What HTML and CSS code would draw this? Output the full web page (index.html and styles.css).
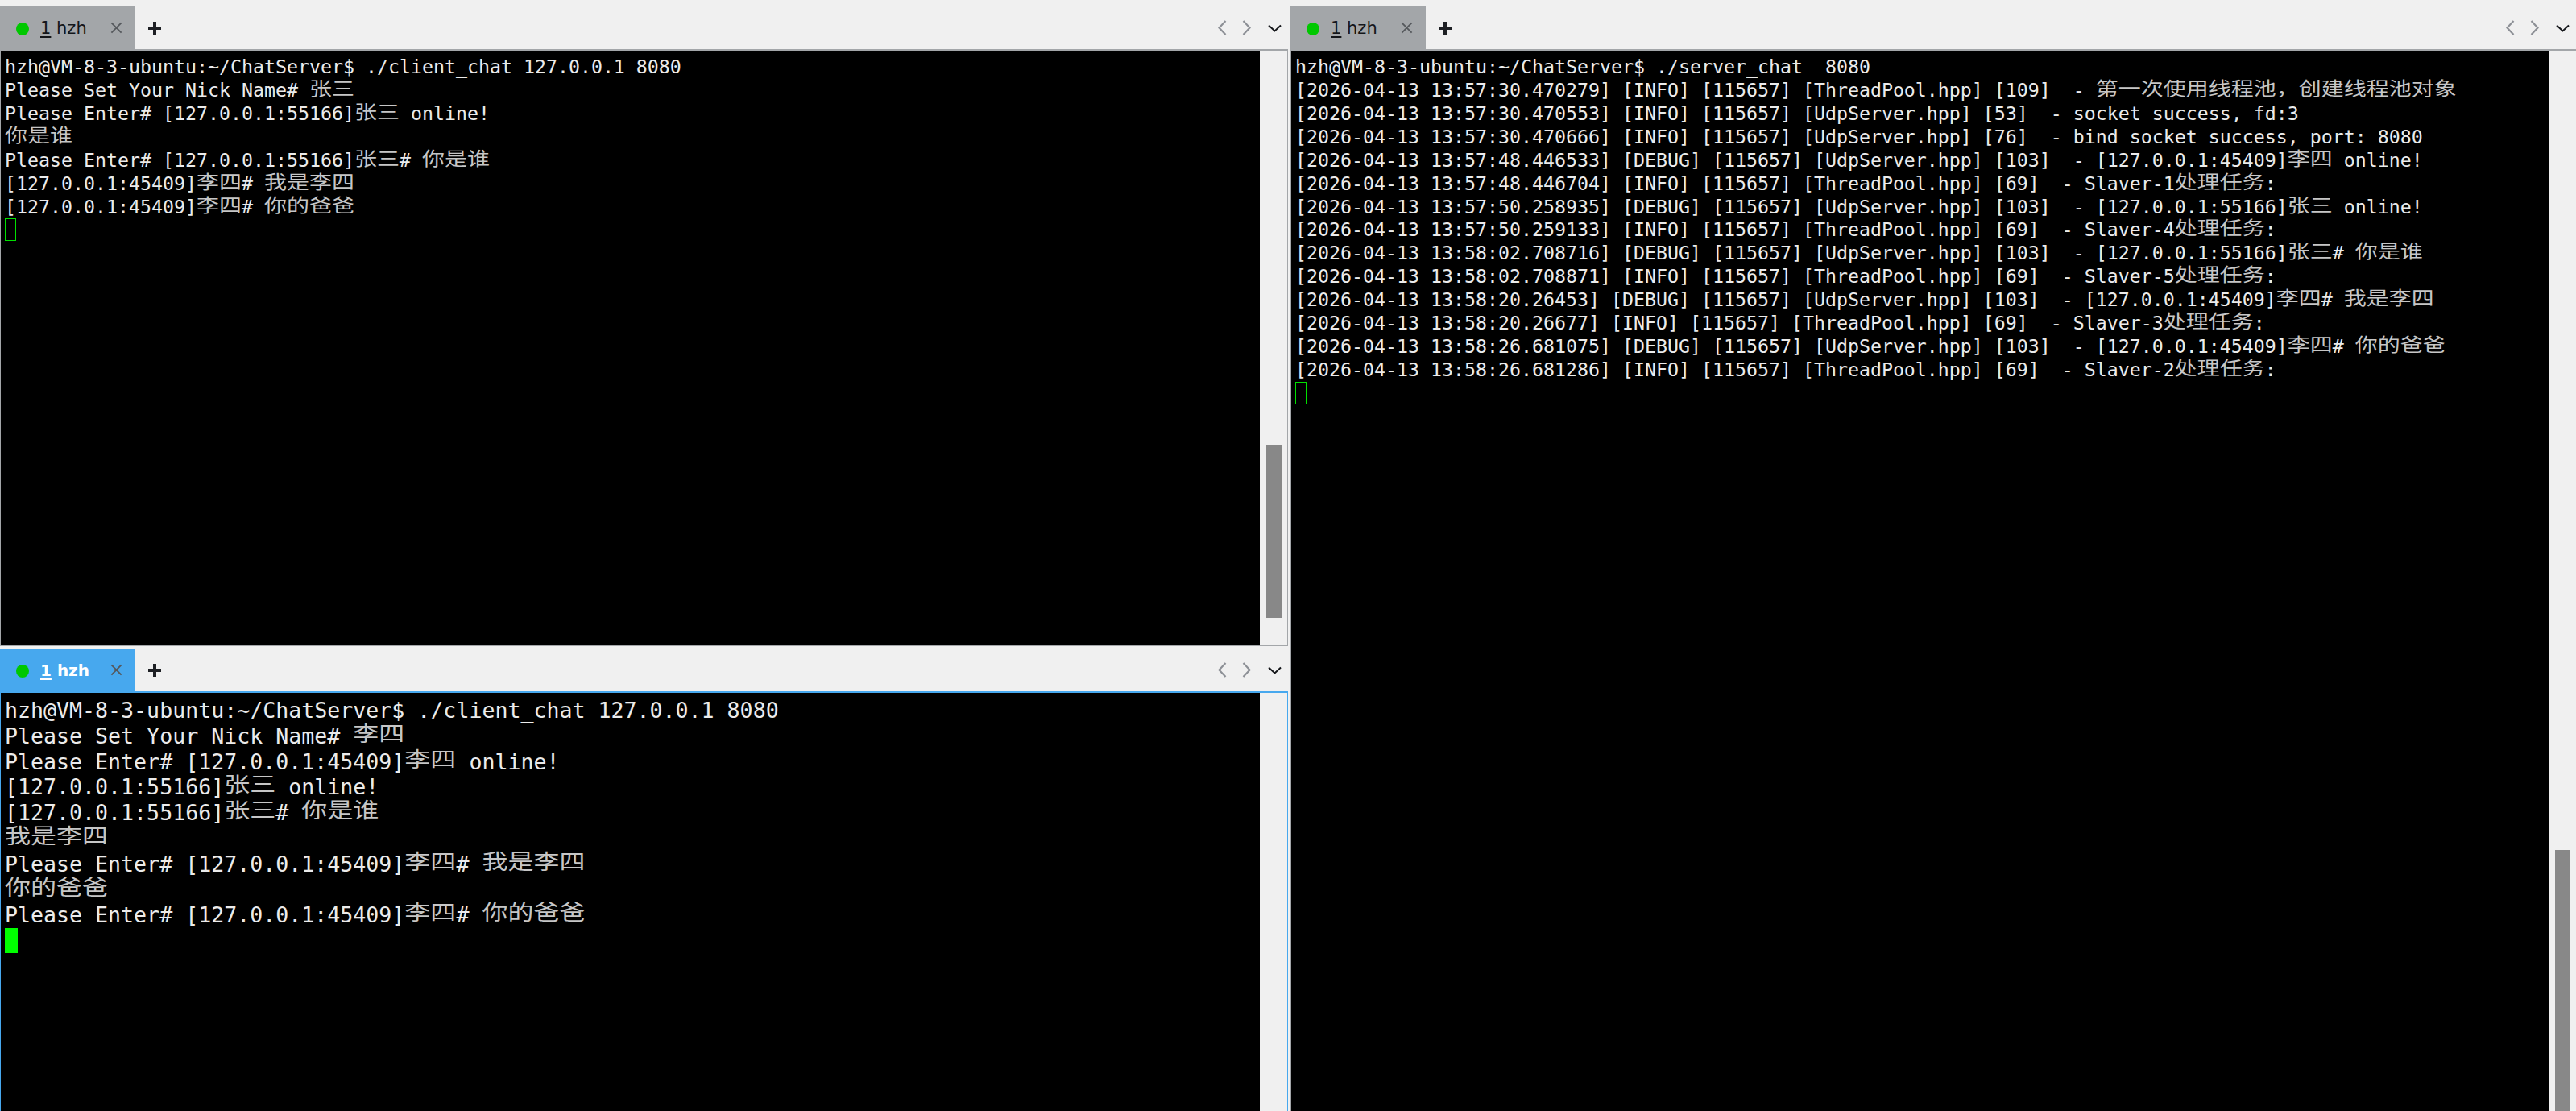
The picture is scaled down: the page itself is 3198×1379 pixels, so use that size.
FILE: index.html
```html
<!DOCTYPE html>
<html lang="zh">
<head>
<meta charset="utf-8">
<title>hzh</title>
<link rel="stylesheet" href="styles.css">
</head>
<body>
<div class="app">
  <div class="col-left">
    <section class="pane pane-top">
      <div class="tabbar">
        <div class="tab"><i class="dot"></i><span class="tab-label"><u>1</u> hzh</span>
          <svg class="close" viewBox="0 0 16 16"><path d="M1.5 1.5 14.5 14.5M14.5 1.5 1.5 14.5"/></svg></div>
        <svg class="plus" viewBox="0 0 16 16"><path d="M8 0V16M0 8H16"/></svg>
        <div class="controls">
          <svg class="chev" viewBox="0 0 11 19"><path d="M9.5 1 1.5 9.5 9.5 18"/></svg>
          <svg class="chev" viewBox="0 0 11 19"><path d="M1.5 1 9.5 9.5 1.5 18"/></svg>
          <svg class="down" viewBox="0 0 17 10"><path d="M1 1.5 8.5 8.5 16 1.5"/></svg>
        </div>
      </div>
      <div class="view view-closed">
        <div class="term term-small">
          <div class="line">hzh@VM-8-3-ubuntu:~/ChatServer$ ./client_chat 127.0.0.1 8080</div>
          <div class="line">Please Set Your Nick Name# <span class="c">张三</span></div>
          <div class="line">Please Enter# [127.0.0.1:55166]<span class="c">张三</span> online!</div>
          <div class="line"><span class="c">你是谁</span></div>
          <div class="line">Please Enter# [127.0.0.1:55166]<span class="c">张三</span># <span class="c">你是谁</span></div>
          <div class="line">[127.0.0.1:45409]<span class="c">李四</span># <span class="c">我是李四</span></div>
          <div class="line">[127.0.0.1:45409]<span class="c">李四</span># <span class="c">你的爸爸</span></div>
          <div class="cursor cursor-idle"></div>
        </div>
        <div class="scroll"><div class="thumb thumb-left"></div></div>
      </div>
    </section>
    <section class="pane pane-bottom">
      <div class="tabbar">
        <div class="tab tab-active"><i class="dot"></i><span class="tab-label"><u>1</u> hzh</span>
          <svg class="close" viewBox="0 0 16 16"><path d="M1.5 1.5 14.5 14.5M14.5 1.5 1.5 14.5"/></svg></div>
        <svg class="plus" viewBox="0 0 16 16"><path d="M8 0V16M0 8H16"/></svg>
        <div class="controls">
          <svg class="chev" viewBox="0 0 11 19"><path d="M9.5 1 1.5 9.5 9.5 18"/></svg>
          <svg class="chev" viewBox="0 0 11 19"><path d="M1.5 1 9.5 9.5 1.5 18"/></svg>
          <svg class="down" viewBox="0 0 17 10"><path d="M1 1.5 8.5 8.5 16 1.5"/></svg>
        </div>
      </div>
      <div class="view view-active">
        <div class="term term-large">
          <div class="line">hzh@VM-8-3-ubuntu:~/ChatServer$ ./client_chat 127.0.0.1 8080</div>
          <div class="line">Please Set Your Nick Name# <span class="c">李四</span></div>
          <div class="line">Please Enter# [127.0.0.1:45409]<span class="c">李四</span> online!</div>
          <div class="line">[127.0.0.1:55166]<span class="c">张三</span> online!</div>
          <div class="line">[127.0.0.1:55166]<span class="c">张三</span># <span class="c">你是谁</span></div>
          <div class="line"><span class="c">我是李四</span></div>
          <div class="line">Please Enter# [127.0.0.1:45409]<span class="c">李四</span># <span class="c">我是李四</span></div>
          <div class="line"><span class="c">你的爸爸</span></div>
          <div class="line">Please Enter# [127.0.0.1:45409]<span class="c">李四</span># <span class="c">你的爸爸</span></div>
          <div class="cursor cursor-focus"></div>
        </div>
        <div class="scroll"></div>
      </div>
    </section>
  </div>
  <section class="pane col-right">
    <div class="tabbar">
      <div class="tab"><i class="dot"></i><span class="tab-label"><u>1</u> hzh</span>
        <svg class="close" viewBox="0 0 16 16"><path d="M1.5 1.5 14.5 14.5M14.5 1.5 1.5 14.5"/></svg></div>
      <svg class="plus" viewBox="0 0 16 16"><path d="M8 0V16M0 8H16"/></svg>
      <div class="controls">
        <svg class="chev" viewBox="0 0 11 19"><path d="M9.5 1 1.5 9.5 9.5 18"/></svg>
        <svg class="chev" viewBox="0 0 11 19"><path d="M1.5 1 9.5 9.5 1.5 18"/></svg>
        <svg class="down" viewBox="0 0 17 10"><path d="M1 1.5 8.5 8.5 16 1.5"/></svg>
      </div>
    </div>
    <div class="view view-right">
      <div class="term term-small">
        <div class="line">hzh@VM-8-3-ubuntu:~/ChatServer$ ./server_chat  8080</div>
        <div class="line">[2026-04-13 13:57:30.470279] [INFO] [115657] [ThreadPool.hpp] [109]  - <span class="c">第一次使用线程池，创建线程池对象</span></div>
        <div class="line">[2026-04-13 13:57:30.470553] [INFO] [115657] [UdpServer.hpp] [53]  - socket success, fd:3</div>
        <div class="line">[2026-04-13 13:57:30.470666] [INFO] [115657] [UdpServer.hpp] [76]  - bind socket success, port: 8080</div>
        <div class="line">[2026-04-13 13:57:48.446533] [DEBUG] [115657] [UdpServer.hpp] [103]  - [127.0.0.1:45409]<span class="c">李四</span> online!</div>
        <div class="line">[2026-04-13 13:57:48.446704] [INFO] [115657] [ThreadPool.hpp] [69]  - Slaver-1<span class="c">处理任务</span>:</div>
        <div class="line">[2026-04-13 13:57:50.258935] [DEBUG] [115657] [UdpServer.hpp] [103]  - [127.0.0.1:55166]<span class="c">张三</span> online!</div>
        <div class="line">[2026-04-13 13:57:50.259133] [INFO] [115657] [ThreadPool.hpp] [69]  - Slaver-4<span class="c">处理任务</span>:</div>
        <div class="line">[2026-04-13 13:58:02.708716] [DEBUG] [115657] [UdpServer.hpp] [103]  - [127.0.0.1:55166]<span class="c">张三</span># <span class="c">你是谁</span></div>
        <div class="line">[2026-04-13 13:58:02.708871] [INFO] [115657] [ThreadPool.hpp] [69]  - Slaver-5<span class="c">处理任务</span>:</div>
        <div class="line">[2026-04-13 13:58:20.26453] [DEBUG] [115657] [UdpServer.hpp] [103]  - [127.0.0.1:45409]<span class="c">李四</span># <span class="c">我是李四</span></div>
        <div class="line">[2026-04-13 13:58:20.26677] [INFO] [115657] [ThreadPool.hpp] [69]  - Slaver-3<span class="c">处理任务</span>:</div>
        <div class="line">[2026-04-13 13:58:26.681075] [DEBUG] [115657] [UdpServer.hpp] [103]  - [127.0.0.1:45409]<span class="c">李四</span># <span class="c">你的爸爸</span></div>
        <div class="line">[2026-04-13 13:58:26.681286] [INFO] [115657] [ThreadPool.hpp] [69]  - Slaver-2<span class="c">处理任务</span>:</div>
        <div class="cursor cursor-idle"></div>
      </div>
      <div class="scroll"><div class="thumb thumb-right"></div></div>
    </div>
  </section>
</div>
</body>
</html>
```
FILE: styles.css
```css
html, body {
  margin: 0;
  padding: 0;
  height: 100%;
  background: #f0f0f0;
  overflow: hidden;
}

.app {
  display: flex;
  height: 1379px;
  gap: 3px;
}

.col-left {
  width: 1599px;
  display: flex;
  flex-direction: column;
  flex: none;
}

.col-right {
  flex: 1;
  min-width: 0;
}

.pane {
  display: flex;
  flex-direction: column;
}

.pane-top {
  height: 802px;
  flex: none;
}

.pane-bottom {
  flex: 1;
  min-height: 0;
}

.tabbar {
  display: flex;
  align-items: center;
  height: 53px;
  flex: none;
  padding-right: 8px;
  background: #f0f0f0;
}

.pane-top .tabbar,
.col-right .tabbar {
  padding-top: 8px;
}

.pane-bottom .tabbar {
  padding-top: 3px;
}

.tab {
  width: 168px;
  height: 53px;
  display: flex;
  align-items: center;
  flex: none;
  background: #a3a6a9;
  color: #14161a;
  font-family: "DejaVu Sans", sans-serif;
  font-size: 21px;
}

.tab-active {
  background: #47a8ee;
  color: #fff;
  font-weight: 700;
  font-size: 20px;
}

.dot {
  width: 16px;
  height: 16px;
  border-radius: 50%;
  background: #00c800;
  margin: 3px 0 0 20px;
  flex: none;
}

.tab-label {
  margin-left: 14px;
  width: 87px;
  flex: none;
  white-space: pre;
  line-height: 28px;
}

.tab-label u {
  text-underline-offset: 3px;
}

.close {
  width: 15px;
  height: 15px;
  flex: none;
  fill: none;
  stroke: #55585c;
  stroke-width: 2;
}

.plus {
  width: 16px;
  height: 16px;
  margin-left: 16px;
  flex: none;
  fill: none;
  stroke: #1e2024;
  stroke-width: 4;
}

.controls {
  margin-left: auto;
  display: flex;
  align-items: center;
}

.chev {
  width: 11px;
  height: 19px;
  margin-right: 19px;
  fill: none;
  stroke: #8d9096;
  stroke-width: 2.2;
}

.chev + .chev {
  margin-right: 21px;
}

.down {
  width: 17px;
  height: 10px;
  fill: none;
  stroke: #14161a;
  stroke-width: 2;
}

.view {
  flex: 1;
  min-height: 0;
  display: flex;
  border-top: 2px solid #a3a6a9;
  border-left: 1px solid #a3a6a9;
  border-right: 1px solid #a3a6a9;
}

.view-closed {
  border-bottom: 1px solid #a3a6a9;
}

.view-active {
  border-top-color: #47a8ee;
  border-left-color: #47a8ee;
  border-right-color: #47a8ee;
}

.view-right {
  border-right: 0;
}

.term {
  flex: 1;
  min-width: 0;
  background: #000;
  color: #ebebeb;
  font-family: "DejaVu Sans Mono", "Noto Sans CJK SC", monospace;
  overflow: hidden;
  padding: 6px 0 0 5px;
}

.term-small {
  font-size: 23.26px;
  --row: 28.93px;
  --cell: 14px;
}

.term-large {
  font-size: 26.6px;
  --row: 31.8px;
  --cell: 16px;
}

.line {
  height: var(--row);
  line-height: var(--row);
  white-space: pre;
}

.c {
  display: inline-block;
  font-family: "Noto Sans CJK SC", sans-serif;
  font-size: 1.204em;
  line-height: 0;
  color: #c6c6c6;
  transform: scaleY(0.82);
}

.cursor {
  box-sizing: border-box;
  width: var(--cell);
  height: calc(var(--row) - 1px);
}

.cursor-idle {
  border: 1.5px solid #00e000;
}

.cursor-focus {
  background: #00ff00;
}

.scroll {
  width: 34px;
  flex: none;
  background: #f0f0f0;
  padding-left: 8px;
  box-sizing: border-box;
  overflow: hidden;
}

.thumb {
  width: 19px;
  background: #888;
}

.thumb-left {
  margin-top: 489px;
  height: 215px;
}

.thumb-right {
  margin-top: 992px;
  height: 324px;
}
```
